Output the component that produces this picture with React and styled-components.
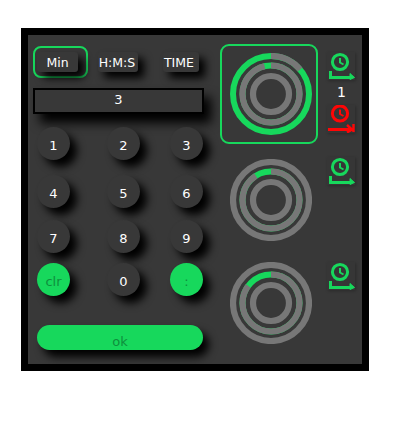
import { createGlobalStyle } from 'styled-components'
import styled from 'styled-components'

const GREEN = '#17d85c'
const RED = '#ff0606'

const Global = createGlobalStyle`
	html, body {
		margin: 0;
		background: #fff;
	}
	body {
		font-family: "DejaVu Sans", sans-serif;
	}
`

const Page = styled.div`
		padding: 28px 0 0 21px;
		height: 412px;
	`,
	Frame = styled.div`
		box-sizing: border-box;
		width: 348px;
		height: 343px;
		border: 7px solid #000;
		background: #383838;
		display: flex;
		padding-left: 5px;
	`,
	Left = styled.div`
		width: 171px;
		padding-top: 11px;
		margin-right: 16px;
	`,
	Modes = styled.div`
		display: flex;
		height: 32px;
	`,
	ModeSlot = styled.div`
		box-sizing: border-box;
		width: ${p => p.$width}px;
		height: 32px;
		padding: ${p => p.$active ? '4px 0 0 2px' : '6px 0 0 0'};
		margin-left: ${p => p.$gap || 0}px;
		border: ${p => p.$active ? `2px solid ${GREEN}` : 'none'};
		border-radius: 8px;
	`,
	ModeButton = styled.button`
		display: block;
		box-sizing: border-box;
		width: ${p => p.$width}px;
		height: 20px;
		padding: 0 ${p => p.$shift || 0}px 0 0;
		border: none;
		border-radius: 3px;
		background: #383838;
		color: #fff;
		font: 12.5px "DejaVu Sans", sans-serif;
		white-space: nowrap;
		box-shadow: 6px 6px 8px #000;
	`,
	Display = styled.div`
		box-sizing: border-box;
		height: 26px;
		margin-top: 10px;
		border: 2px solid #000;
		background: #383838;
		color: #fff;
		font-size: 13px;
		line-height: 20px;
		text-align: center;
		box-shadow: 7px 9px 11px #000;
	`,
	Keys = styled.div`
		display: grid;
		grid-template-columns: 70px 63px 33px;
		grid-template-rows: 48px 45px 43px 33px;
		width: 166px;
		margin: 13px 0 0 4px;
	`,
	Key = styled.button`
		box-sizing: border-box;
		width: 33px;
		height: 33px;
		padding: 4px 0 0;
		border: none;
		border-radius: 50%;
		background: ${p => p.$accent ? GREEN : '#383838'};
		color: ${p => p.$accent ? '#0e8f3d' : '#fff'};
		font: 13px "DejaVu Sans", sans-serif;
		box-shadow: 7px 7px 8px #000;
	`,
	OkButton = styled.button`
		display: block;
		box-sizing: border-box;
		width: 166px;
		height: 25px;
		margin: 29px 0 0 4px;
		padding: 7px 0 0;
		border: none;
		border-radius: 13px;
		background: ${GREEN};
		color: #0e8f3d;
		font: 13px "DejaVu Sans", sans-serif;
		box-shadow: 6px 7px 8px #000;
	`,
	Right = styled.div`
		padding-top: 9px;
		width: 136px;
	`,
	TimerRow = styled.div`
		display: flex;
		height: ${p => p.$height}px;
	`,
	RingBox = styled.div`
		box-sizing: border-box;
		width: 100px;
		height: 100px;
		display: flex;
		align-items: center;
		justify-content: center;
		padding-left: 4px;
		border: 2px solid ${p => p.$selected ? GREEN : 'transparent'};
		border-radius: 9px;
	`,
	Side = styled.div`
		display: flex;
		flex-direction: column;
		align-items: center;
		width: 30px;
		margin-left: 9px;
		padding-top: ${p => p.$top || 0}px;
	`,
	Count = styled.div`
		color: #fff;
		font-size: 14px;
		line-height: 20px;
		height: 20px;
		margin: 2px 0 3px;
	`,
	IconBox = styled.svg`
		display: block;
		background: #363636;
		box-shadow: 1px 1px 3px rgba(0, 0, 0, 0.25);
	`

const Ring = ({ r, green }) => (
	<g transform="rotate(-90 41 41)" fill="none">
		{green > 0 && <circle cx="41" cy="41" r={r} stroke={GREEN} strokeWidth="6" />}
		<circle cx="41" cy="41" r={r} stroke="#777" strokeWidth="6.2" pathLength="360" strokeDasharray={`${360 - green} 360`} />
	</g>
)

const Rings = ({ outer = 0, middle = 0 }) => (
	<svg width="82" height="82" viewBox="0 0 82 82">
		<Ring r={38} green={outer} />
		<Ring r={28.5} green={middle} />
		<Ring r={18} green={0} />
	</svg>
)

const StartIcon = () => (
	<IconBox width="28" height="28" viewBox="0 0 28 28" fill="none" stroke={GREEN}>
		<circle cx="13" cy="10" r="7.6" strokeWidth="3" />
		<path d="M13 6v4.5l3.5 2" strokeWidth="2" />
		<path d="M3.5 19v6.5h21" strokeWidth="3" />
		<path d="M23 21.5l4.5 4-4.5 2z" fill={GREEN} strokeWidth="1" />
	</IconBox>
)

const StopIcon = () => (
	<IconBox width="28" height="28" viewBox="0 0 28 28" fill="none" stroke={RED}>
		<circle cx="13" cy="8.5" r="7.6" strokeWidth="3" />
		<path d="M13 4.5v4.5l3.5 2" strokeWidth="2" />
		<path d="M1 24.5h24" strokeWidth="3" />
		<path d="M20 20l5 4.5-5 3M26.5 19v8" strokeWidth="2.4" />
	</IconBox>
)

const keys = ['1', '2', '3', '4', '5', '6', '7', '8', '9', 'clr', '0', ':']

const App = () => (
	<Page>
		<Global />
		<Frame>
			<Left>
				<Modes>
					<ModeSlot $active $width={55}>
						<ModeButton $width={41}>Min</ModeButton>
					</ModeSlot>
					<ModeSlot $width={40} $gap={10}>
						<ModeButton $width={40} $shift={2}>H:M:S</ModeButton>
					</ModeSlot>
					<ModeSlot $width={36} $gap={25}>
						<ModeButton $width={36} $shift={4}>TIME</ModeButton>
					</ModeSlot>
				</Modes>
				<Display>3</Display>
				<Keys>
					{keys.map(k => (
						<Key key={k} $accent={k === 'clr' || k === ':'}>{k}</Key>
					))}
				</Keys>
				<OkButton>ok</OkButton>
			</Left>
			<Right>
				<TimerRow $height={106}>
					<RingBox $selected>
						<Rings outer={310} middle={13} />
					</RingBox>
					<Side $top={8}>
						<StartIcon />
						<Count>1</Count>
						<StopIcon />
					</Side>
				</TimerRow>
				<TimerRow $height={103}>
					<RingBox>
						<Rings middle={32} />
					</RingBox>
					<Side $top={7}>
						<StartIcon />
					</Side>
				</TimerRow>
				<TimerRow $height={100}>
					<RingBox>
						<Rings middle={53} />
					</RingBox>
					<Side $top={9}>
						<StartIcon />
					</Side>
				</TimerRow>
			</Right>
		</Frame>
	</Page>
)

export default App
